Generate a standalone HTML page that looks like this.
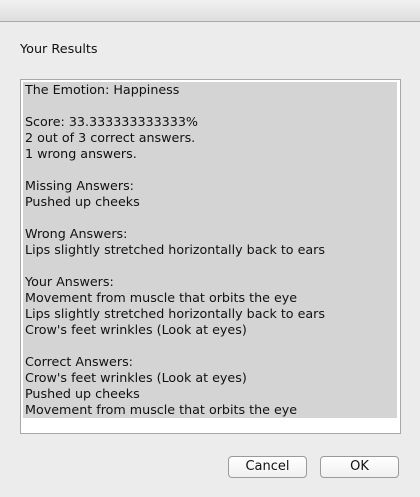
<!DOCTYPE html>
<html><head><style>
body{margin:0;width:420px;height:497px;background:#ececec;font-family:"DejaVu Sans",sans-serif;font-size:12.7px;color:#111;position:relative;overflow:hidden}
.tb{position:absolute;left:0;top:0;width:420px;height:21px;background:linear-gradient(#f1f1f1,#dedede);border-bottom:1px solid #a9a9a9}
.title{position:absolute;left:20px;top:42px;font-size:12.8px}
.box{position:absolute;left:20px;top:79px;width:379px;height:353px;background:#fff;border:1px solid #a8a8a8}
.sel{position:absolute;left:2px;top:2px;width:374px;height:336px;background:#d4d4d4}
.txt{position:absolute;left:4px;top:2px;line-height:16px;white-space:pre}
.btn{position:absolute;top:456px;width:77px;height:20px;border:1px solid #9a9a9a;border-radius:4px;background:linear-gradient(#fff,#f0f0f0);text-align:center;line-height:20px;font-size:13px}
</style></head><body>
<div class="tb"></div>
<div class="title">Your Results</div>
<div class="box"><div class="sel"></div><div class="txt">The Emotion: Happiness

Score: 33.333333333333%
2 out of 3 correct answers.
1 wrong answers.

Missing Answers:
Pushed up cheeks

Wrong Answers:
Lips slightly stretched horizontally back to ears

Your Answers:
Movement from muscle that orbits the eye
Lips slightly stretched horizontally back to ears
Crow's feet wrinkles (Look at eyes)

Correct Answers:
Crow's feet wrinkles (Look at eyes)
Pushed up cheeks
Movement from muscle that orbits the eye</div></div>
<div class="btn" style="left:228px">Cancel</div>
<div class="btn" style="left:320px">OK</div>
</body></html>
